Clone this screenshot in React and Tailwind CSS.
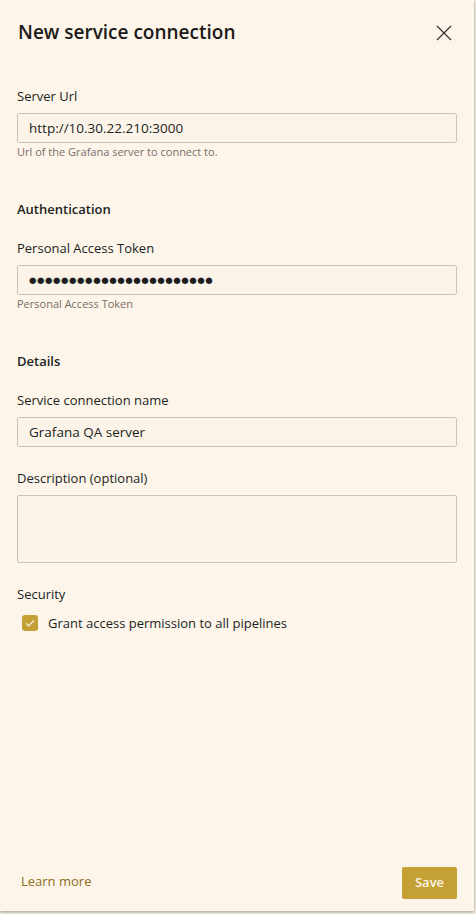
import { useState } from 'react';

const font = { fontFamily: '"Segoe UI", "Open Sans", "Noto Sans", sans-serif' };

function Field({ label, children, helper }) {
  return (
    <div>
      <label className="block text-[13px] leading-5 text-[#201f1e]">{label}</label>
      <div className="mt-[7px]">{children}</div>
      {helper && <p className="mt-px text-[11px] leading-4 text-[#7a6c6a]">{helper}</p>}
    </div>
  );
}

const inputCls =
  'h-[30px] w-[440px] rounded-[2px] border border-[#cbc3b8] bg-[#fcf4e8] px-[11px] text-[13.5px] text-[#201f1e] outline-none';

export default function App() {
  const [grant, setGrant] = useState(true);

  return (
    <div className="h-[914px] w-[476px] bg-[#f3ede3]" style={font}>
      <div className="flex h-[911px] w-[474px] flex-col bg-[#fdf5e9] shadow-[0_1px_3px_rgba(0,0,0,0.35)]">
        <div className="flex items-start justify-between pl-[18px] pr-[22px] pt-[18px]">
          <h1 className="text-[19px] font-semibold leading-7 text-[#1b1a19]">New service connection</h1>
          <button className="mt-[7px] text-[#323130]" aria-label="Close">
            <svg width="16" height="16" viewBox="0 0 16 16" fill="none" stroke="currentColor" strokeWidth="1.2">
              <path d="M1 1l14 14M15 1L1 15" />
            </svg>
          </button>
        </div>

        <div className="flex-1 px-[17px]">
          <div className="mt-10">
            <Field label="Server Url" helper="Url of the Grafana server to connect to.">
              <input className={inputCls} defaultValue="http://10.30.22.210:3000" />
            </Field>
          </div>

          <h2 className="mt-[39px] text-[13px] font-semibold leading-5 text-[#201f1e]">Authentication</h2>
          <div className="mt-[19px]">
            <Field label="Personal Access Token" helper="Personal Access Token">
              <div className="flex h-[30px] w-[440px] items-center rounded-[2px] border border-[#cbc3b8] bg-[#fcf4e8] px-[11px]">
                <span
                  className="text-[8.5px] leading-none tracking-[0.6px] text-[#201f1e]"
                  style={{ fontFamily: '"DejaVu Sans", sans-serif' }}
                >
                  {'●'.repeat(23)}
                </span>
              </div>
            </Field>
          </div>

          <h2 className="mt-[39px] text-[13px] font-semibold leading-5 text-[#201f1e]">Details</h2>
          <div className="mt-[19px]">
            <Field label="Service connection name">
              <input className={inputCls} defaultValue="Grafana QA server" />
            </Field>
          </div>
          <div className="mt-[21px]">
            <Field label="Description (optional)">
              <textarea className="block h-[68px] w-[440px] resize-none rounded-[2px] border border-[#cbc3b8] bg-[#fcf4e8] px-[11px] py-1 text-[13.5px] outline-none" />
            </Field>
          </div>

          <p className="mt-[21px] text-[13px] leading-5 text-[#201f1e]">Security</p>
          <label className="mt-[9px] flex cursor-pointer items-center gap-[10px] pl-[5px]" onClick={() => setGrant(!grant)}>
            <span className={`flex h-4 w-4 items-center justify-center rounded-[3px] ${grant ? 'bg-[#c4a035]' : 'border border-[#8a8886]'}`}>
              {grant && (
                <svg width="12" height="12" viewBox="0 0 12 12" fill="none" stroke="#fdf5e9" strokeWidth="1.1">
                  <path d="M2 6.3l2.6 2.6L10 3.5" />
                </svg>
              )}
            </span>
            <span className="text-[13px] leading-5 text-[#201f1e]">Grant access permission to all pipelines</span>
          </label>
        </div>

        <div className="flex items-center justify-between pb-3 pl-[21px] pr-[17px]">
          <a className="-mt-1 text-[13px] leading-5 text-[#8c6d20]" href="#">Learn more</a>
          <button className="h-8 w-[55px] rounded-[2px] bg-[#c4a035] text-[13px] font-semibold text-[#fdf5e9]">Save</button>
        </div>
      </div>
    </div>
  );
}
